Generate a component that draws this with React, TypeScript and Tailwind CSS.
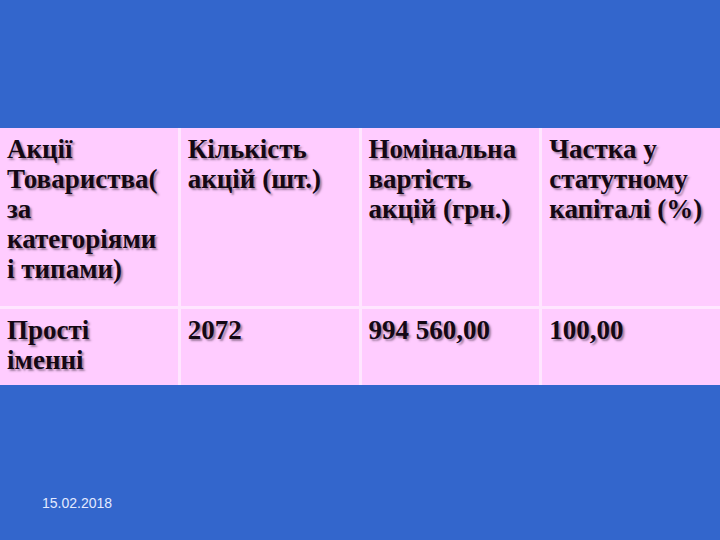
const header = [
  ['Акції', 'Товариства(', 'за', 'категоріями', 'і типами)'],
  ['Кількість', 'акцій (шт.)'],
  ['Номінальна', 'вартість', 'акцій (грн.)'],
  ['Частка у', 'статутному', 'капіталі (%)'],
];

const row = [['Прості', 'іменні'], ['2072'], ['994 560,00'], ['100,00']];

const Cell = ({ lines, tall }: { lines: string[]; tall?: boolean }) => (
  <div
    className={`bg-[#ffccff] pl-[7px] pt-[6px] ${tall ? 'h-[178px]' : 'h-[76px]'} text-[27px] leading-[30px] font-bold text-[#140814] [text-shadow:2px_2px_2px_rgba(70,50,70,0.5)]`}
    style={{ fontFamily: "'Liberation Serif', 'Times New Roman', serif" }}
  >
    {lines.map((l) => (
      <div key={l} className="whitespace-nowrap">
        {l}
      </div>
    ))}
  </div>
);

export default function App() {
  return (
    <div className="w-[720px] h-[540px] bg-[#3366cc] flex flex-col overflow-hidden">
      <div className="h-[128px]" />
      <div className="grid grid-cols-4 gap-[3px] bg-[#ffe6ff]">
        {header.map((lines, i) => (
          <Cell key={i} lines={lines} tall />
        ))}
        {row.map((lines, i) => (
          <Cell key={i} lines={lines} />
        ))}
      </div>
      <div className="flex-1" />
      <div className="pl-[42px] pb-[29px] font-['Liberation_Sans',Arial,sans-serif] text-[14px] leading-[16px] text-[#e4eaff]">
        15.02.2018
      </div>
    </div>
  );
}
